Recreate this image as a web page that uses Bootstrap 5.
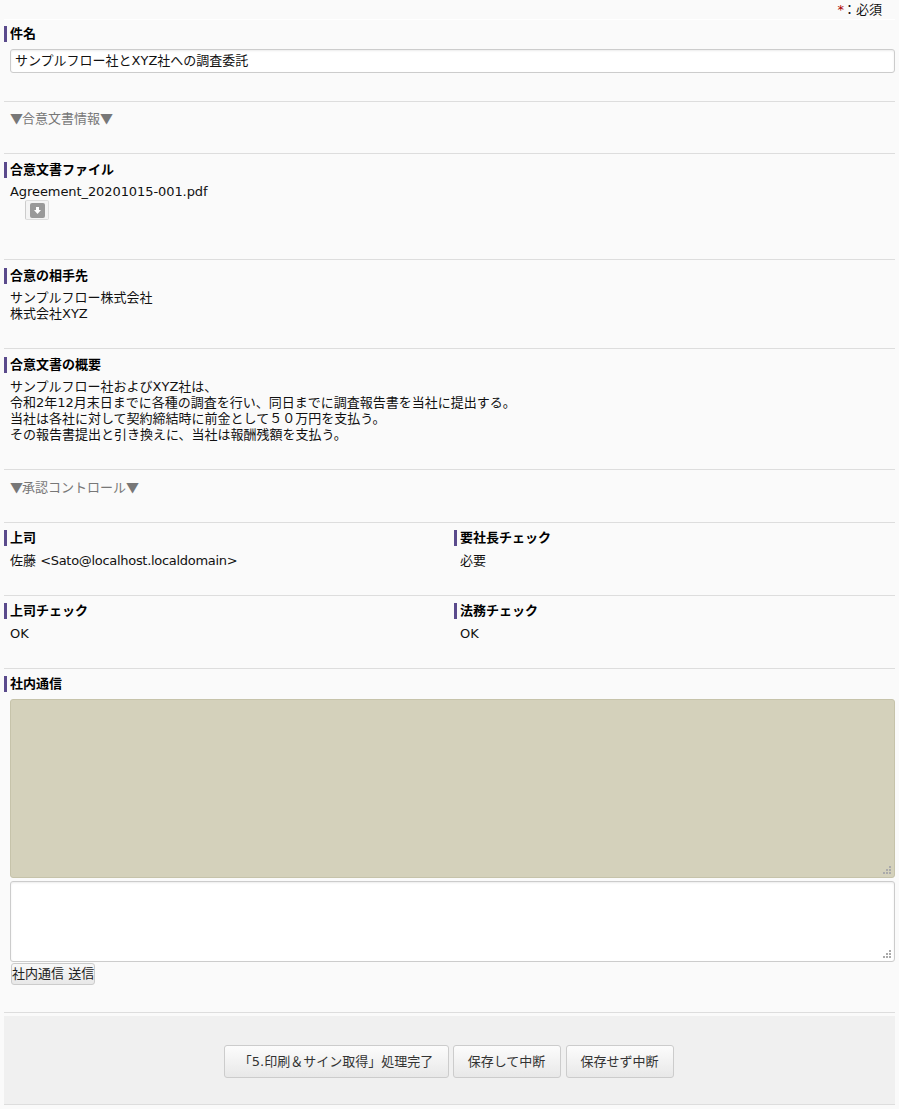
<!DOCTYPE html>
<html lang="ja">
<head>
<meta charset="utf-8">
<title>合意文書</title>
<link href="https://cdn.jsdelivr.net/npm/bootstrap@5.3.0/dist/css/bootstrap.min.css" rel="stylesheet">
<style>
body{background:#fafafa;color:#111;font-family:"DejaVu Sans","Noto Sans CJK JP",sans-serif;font-size:13px;line-height:16px;height:1109px;overflow:hidden}
.sheet{padding:0 4px 0 4px}
.req-note{height:20px;padding:3px 13px 0 0;text-align:right;font-size:13px;line-height:14px;border-bottom:1px solid #fff}
.req-star{color:#a00;margin-right:-1px}
.sec{border-top:1px solid #ddd;padding-top:8px}
.sec-first{border-top:0;height:81px;padding-top:6px}
.sec-file{height:106px}
.sec-party{height:89px}
.sec-summary{height:121px}
.sec-head{height:52px;padding:8px 0 0 6px;color:#777;font-size:13px}
.sec-head-b{height:53px;padding-top:9px}
.tri{font-family:"Noto Sans CJK JP",sans-serif;letter-spacing:-1px}
.sec-pair{height:73px;padding-top:7px}
.sec-pair .fld-label{margin-bottom:8px}
.sec-comm{height:344px;padding-top:7px}
.fld-label{border-left:3px solid #5a4a8c;padding-left:3px;height:16px;line-height:15px;font-weight:700;color:#000;margin-bottom:7px}
.fld-value{padding-left:6px;margin-top:-1px}
.mail-addr{letter-spacing:-.3px}
.file-name{letter-spacing:-.08px}
.fld-input{display:block;width:885px;height:24px;margin-left:6px;padding:0 4px 3px;border:1px solid #ccc;border-radius:3px;background:#fff;color:#111;font:inherit;line-height:19px;box-shadow:inset 0 1px 2px rgba(0,0,0,.08)}
.dl-btn{display:flex;align-items:center;justify-content:center;width:24px;height:20px;margin:0 0 0 21px;padding:0;border:1px solid #ddd;border-left-color:#ccc;border-radius:2px;background:#f4f4f4}
.dl-glyph{display:flex;align-items:center;justify-content:center;width:15px;height:15px;background:#999;border-radius:2px}
.half{width:450px}
.comm-box{display:block;width:885px;margin-left:6px;border:1px solid #ccc;border-radius:3px;padding:2px 4px;font:inherit;resize:none;background-repeat:no-repeat;background-position:right 3px bottom 3px;background-image:url("data:image/svg+xml,%3Csvg xmlns='http://www.w3.org/2000/svg' width='8' height='8'%3E%3Cg fill='%23aaa'%3E%3Crect x='6' width='2' height='2'/%3E%3Crect x='3' y='3' width='2' height='2'/%3E%3Crect x='6' y='3' width='2' height='2'/%3E%3Crect y='6' width='2' height='2'/%3E%3Crect x='3' y='6' width='2' height='2'/%3E%3Crect x='6' y='6' width='2' height='2'/%3E%3C/g%3E%3C/svg%3E")}
.comm-log{height:179px;background-color:#d4d1bb;border-color:#c6c3aa}
.comm-new{height:81px;background-color:#fff;margin-top:3px;box-shadow:inset 0 1px 2px rgba(0,0,0,.08)}
.send-btn{display:block;width:84px;height:22px;margin:1px 0 0 7px;padding:0;border:1px solid #ccc;border-radius:3px;background:linear-gradient(#f8f8f8,#e8e8e8);color:#222;font:inherit;line-height:18px;white-space:nowrap}
.act-wrap{border-top:1px solid #ddd;padding-top:3px}
.act-panel{height:89px;background:#f0f0f0;border-bottom:1px solid #ddd;gap:4px;padding:2px 2px 0 0}
.act-btn{height:33px;padding:0;border:1px solid #ccc;border-radius:3px;background:linear-gradient(#fcfcfc,#e8e8e8);color:#333;font:inherit;line-height:31px;text-align:center}
.act-a{width:225px}
.act-b{width:108px}
.act-c{width:108px;margin-left:1px}
</style>
</head>
<body>
<div class="sheet">
  <div class="req-note"><span class="req-star">*</span>：必須</div>
  <div class="sec sec-first">
    <div class="fld-label">件名</div>
    <input class="fld-input" type="text" value="サンプルフロー社とXYZ社への調査委託">
  </div>
  <div class="sec sec-head"><span class="tri">▼</span>合意文書情報<span class="tri">▼</span></div>
  <div class="sec sec-file">
    <div class="fld-label">合意文書ファイル</div>
    <div class="fld-value"><span class="file-name">Agreement_20201015-001.pdf</span></div>
    <button class="dl-btn" type="button" aria-label="ダウンロード"><span class="dl-glyph"><svg width="9" height="9" viewBox="0 0 9 9"><path d="M3 1h3v3h2L4.5 8 1 4h2z" fill="#fff"/></svg></span></button>
  </div>
  <div class="sec sec-party">
    <div class="fld-label">合意の相手先</div>
    <div class="fld-value">サンプルフロー株式会社<br>株式会社XYZ</div>
  </div>
  <div class="sec sec-summary">
    <div class="fld-label">合意文書の概要</div>
    <div class="fld-value">サンプルフロー社およびXYZ社は、<br>令和2年12月末日までに各種の調査を行い、同日までに調査報告書を当社に提出する。<br>当社は各社に対して契約締結時に前金として５０万円を支払う。<br>その報告書提出と引き換えに、当社は報酬残額を支払う。</div>
  </div>
  <div class="sec sec-head sec-head-b"><span class="tri">▼</span>承認コントロール<span class="tri">▼</span></div>
  <div class="sec sec-pair d-flex">
    <div class="half"><div class="fld-label">上司</div><div class="fld-value">佐藤 <span class="mail-addr">&lt;Sato@localhost.localdomain&gt;</span></div></div>
    <div><div class="fld-label">要社長チェック</div><div class="fld-value">必要</div></div>
  </div>
  <div class="sec sec-pair d-flex">
    <div class="half"><div class="fld-label">上司チェック</div><div class="fld-value">OK</div></div>
    <div><div class="fld-label">法務チェック</div><div class="fld-value">OK</div></div>
  </div>
  <div class="sec sec-comm">
    <div class="fld-label">社内通信</div>
    <textarea class="comm-box comm-log" readonly aria-label="社内通信履歴"></textarea>
    <textarea class="comm-box comm-new" aria-label="社内通信"></textarea>
    <button class="send-btn" type="button">社内通信 送信</button>
  </div>
  <div class="act-wrap">
    <div class="act-panel d-flex align-items-center justify-content-center">
      <button class="act-btn act-a" type="button">「5.印刷＆サイン取得」処理完了</button>
      <button class="act-btn act-b" type="button">保存して中断</button>
      <button class="act-btn act-c" type="button">保存せず中断</button>
    </div>
  </div>
</div>
<script src="https://cdn.jsdelivr.net/npm/bootstrap@5.3.0/dist/js/bootstrap.bundle.min.js"></script>
</body>
</html>
